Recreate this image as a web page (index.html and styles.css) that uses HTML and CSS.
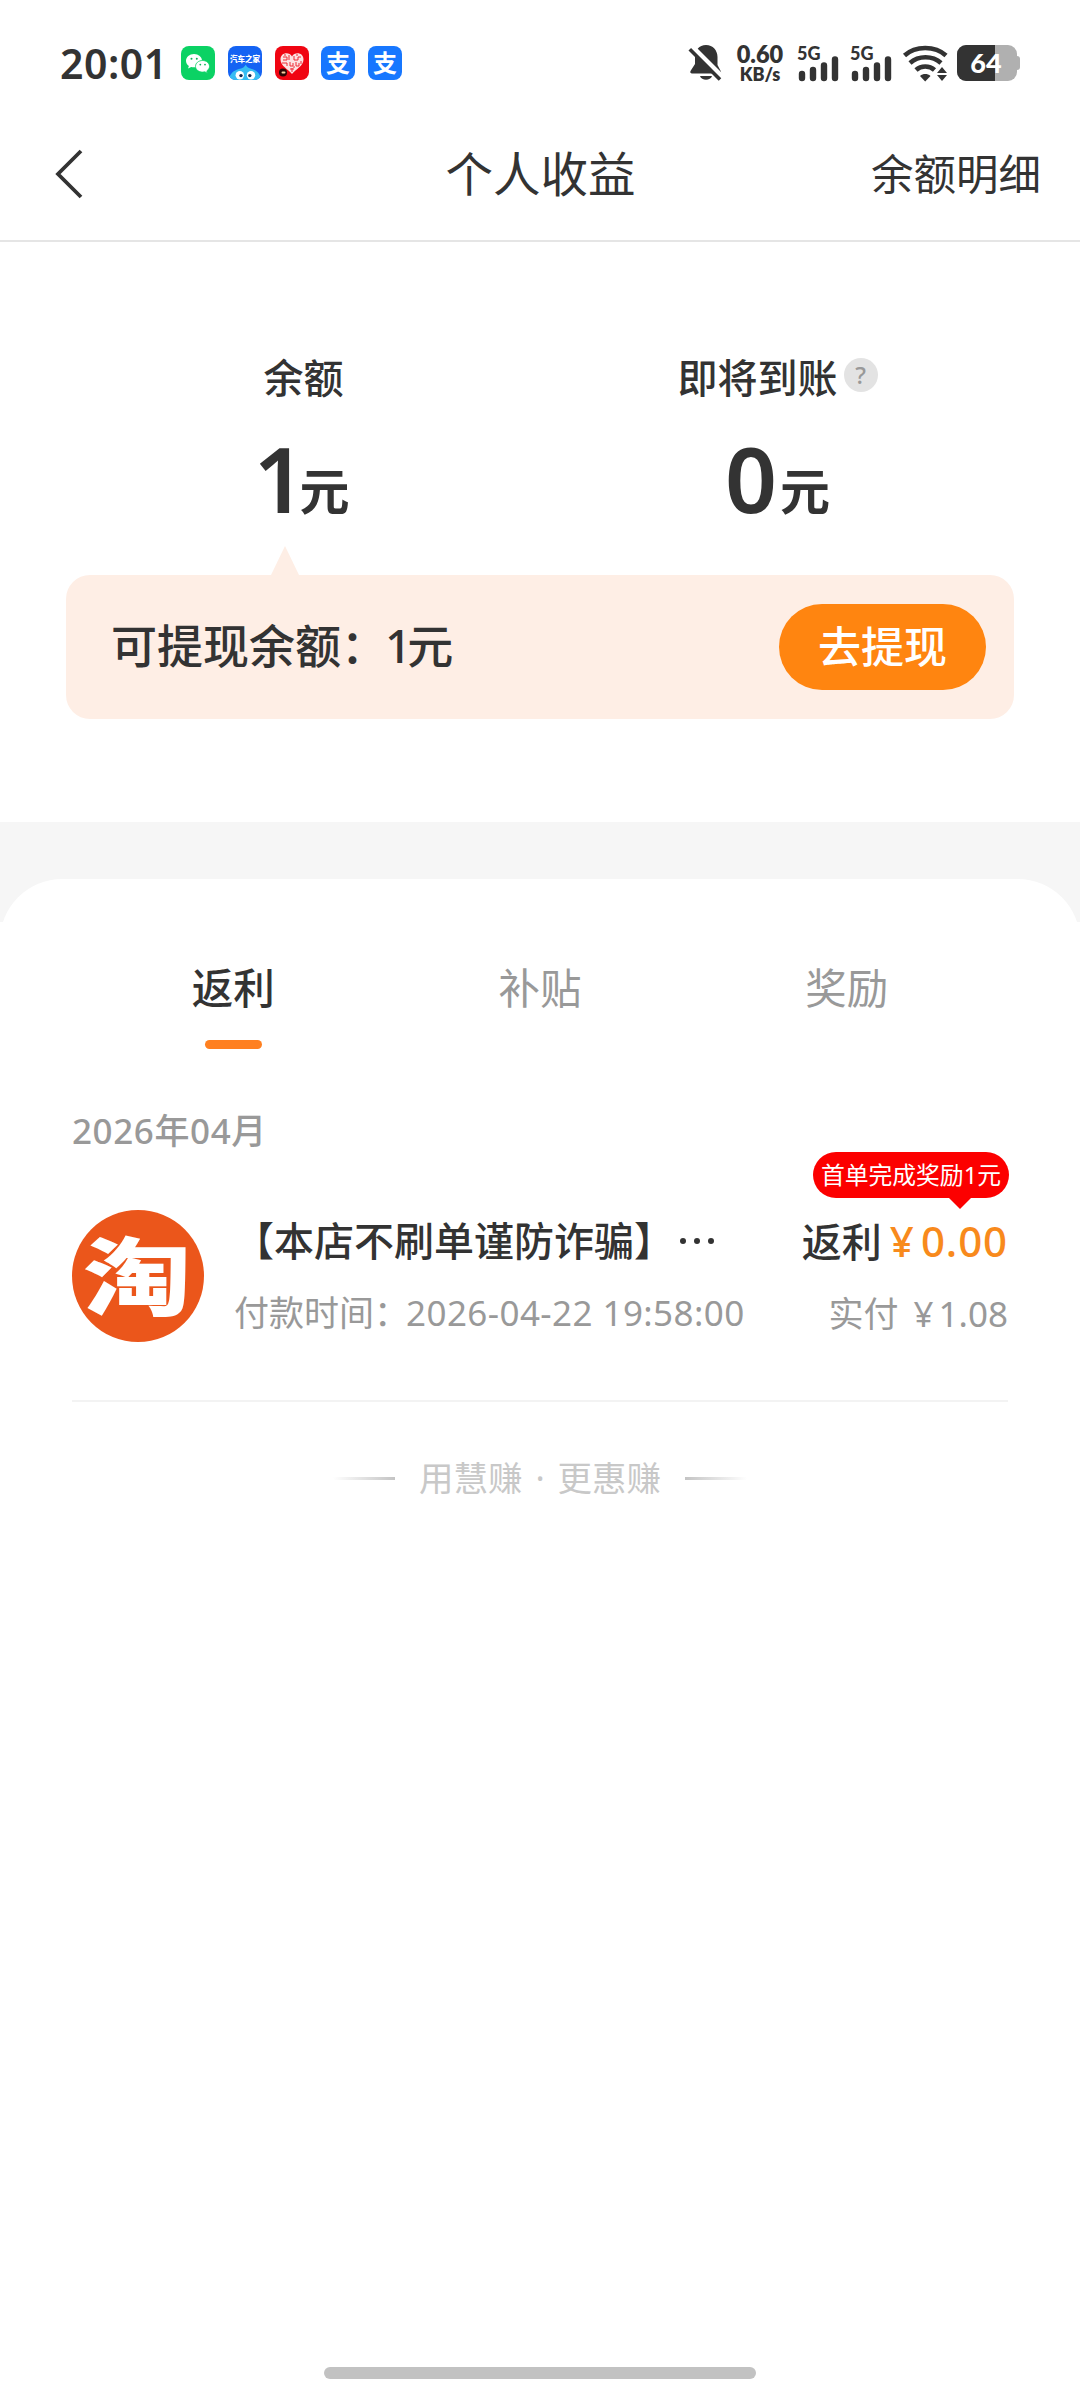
FILE: index.html
```html
<!DOCTYPE html>
<html lang="zh-CN">
<head>
<meta charset="utf-8">
<title>个人收益</title>
<link rel="stylesheet" href="styles.css">
</head>
<body>
<div class="status">
  <span class="clock">20:01</span>
  <div class="apps">
    <svg class="app" viewBox="0 0 34 34"><rect width="34" height="34" rx="8" fill="#0bd264"/><path d="M13 8C8.500 8 5 11 5 14.800c0 2.200 1.100 4 2.900 5.200L7 22.600l3.200-1.600c.9.200 1.800.3 2.800.3 4.500 0 8-3 8-6.600C21 11 17.500 8 13 8z" fill="#fff"/><path d="M21.500 14.500c-3.900 0-7 2.600-7 5.800s3.100 5.800 7 5.800c.8 0 1.600-.1 2.300-.3l2.700 1.400-.7-2.300c1.700-1.100 2.700-2.700 2.700-4.600 0-3.200-3.100-5.800-7-5.800z" fill="#fff" stroke="#0bd264" stroke-width=".8"/><g fill="#0bb457"><circle cx="10.500" cy="12.800" r="1"/><circle cx="15.800" cy="12.800" r="1"/><circle cx="19.300" cy="18.600" r=".9"/><circle cx="24" cy="18.600" r=".9"/></g></svg>
    <svg class="app" viewBox="0 0 34 34"><defs><clipPath id="tile"><rect width="34" height="34" rx="8"/></clipPath></defs><g clip-path="url(#tile)"><rect width="34" height="34" fill="#1463f3"/><path d="M1 35c0-8 6-11.500 12-12.500 2-.6 3.500-1.700 4.800-3.700 1 2.200 2.500 3.200 4.500 3.800C29 24 33 28 33 35z" fill="#36bdf2"/><circle cx="11.800" cy="29.300" r="4.200" fill="#fff"/><circle cx="23" cy="29.300" r="4.200" fill="#fff"/><circle cx="13" cy="29.600" r="1.700" fill="#102a52"/><circle cx="21.800" cy="29.600" r="1.700" fill="#102a52"/></g><text x="17" y="15.500" text-anchor="middle" class="mini">汽车之家</text></svg>
    <svg class="app" viewBox="0 0 34 34"><rect width="34" height="34" rx="8" fill="#f00512"/><path d="M17 10.500C14.500 5.500 5.500 6 5.500 13.500c0 6.500 7.500 9.500 11.500 14.500 4-5 11.500-8 11.500-14.500C28.500 6 19.500 5.500 17 10.500z" fill="#fbe3e3"/><g fill="none" stroke="#ef2b35" stroke-width="1"><path d="M8 11h4v3H8m6-5v5m5-4v4h4v-3h3M7 17h5v3m3-4v4h3v-3m3-1v4h3v-3M15 23h4m-2-1v4M10 8v2m12-2v2M26 15v3M19 20v2"/></g><circle cx="8" cy="26.500" r="4" fill="#2a0705"/><rect x="6.500" y="25.500" width="4" height="2" rx="1" fill="#f5cf9f"/></svg>
    <svg class="app" viewBox="0 0 34 34"><rect width="34" height="34" rx="8" fill="#1777ff"/><text x="17" y="25.500" text-anchor="middle" class="pay">支</text></svg>
    <svg class="app" viewBox="0 0 34 34"><rect width="34" height="34" rx="8" fill="#1777ff"/><text x="17" y="25.500" text-anchor="middle" class="pay">支</text></svg>
  </div>
  <div class="signals">
    <svg class="bell" viewBox="0 0 34 38"><path d="M17 1C10 1 6 6.500 6 13v7L1.500 27c-.6 1.500 0 2.500 1.500 2.500h28c1 0 1.500-1.200.8-2.200L28.500 21v-8C28.500 6.500 24 1 17 1z" fill="#333"/><path d="M11 32h12c-1.500 5-10.500 5-12 0z" fill="#333"/><path d="M2 3l31 31" stroke="#fff" stroke-width="7"/><path d="M.8 5.200L31 35.500" stroke="#333" stroke-width="3.600"/></svg>
    <div class="speed"><span class="rate">0.60</span><span class="unit">KB/s</span></div>
    <div class="cell"><span class="gen">5G</span><svg class="bars" viewBox="0 0 42 26"><path d="M5 19v4M16 15v8M27 10.500V23M38 4.500V23" stroke="#333" stroke-width="6.400" stroke-linecap="round"/></svg></div>
    <div class="cell"><span class="gen">5G</span><svg class="bars" viewBox="0 0 42 26"><path d="M5 19v4M16 15v8M27 10.500V23M38 4.500V23" stroke="#333" stroke-width="6.400" stroke-linecap="round"/></svg></div>
    <svg class="wifi" viewBox="0 0 45 37"><g fill="none" stroke="#333" stroke-width="4.600"><path d="M1.500 10.500C12.500.5 32 .5 43 10.500"/><path d="M7 18c8.500-7.600 22.500-7.600 31 0"/><path d="M13 25c5-4.600 13.500-4.600 18.500 0"/></g><path d="M17 31c3-2.600 7.500-2.600 10.500 0L22.200 36.500z" fill="#333"/><path d="M39 22l5 6H34zM39 36l5-6H34z" fill="#333"/></svg>
    <svg class="battery" viewBox="0 0 64 36"><defs><clipPath id="cell"><rect width="60" height="36" rx="9"/></clipPath></defs><rect x="57" y="11" width="6" height="14" rx="3" fill="#b0b0b0"/><g clip-path="url(#cell)"><rect width="60" height="36" fill="#b0b0b0"/><rect width="38" height="36" fill="#333"/></g><text x="29" y="28" text-anchor="middle" class="level">64</text></svg>
  </div>
</div>

<header class="nav">
  <svg class="back" viewBox="0 0 30 50"><path d="M27 2L4 25l23 23" fill="none" stroke="#333" stroke-width="3.800"/></svg>
  <h1 class="title">个人收益</h1>
  <span class="detail">余额明细</span>
</header>

<section class="summary">
  <div class="totals">
    <div class="total">
      <div class="label">余额</div>
      <div class="amount first"><span class="figure one">1</span><span class="yuan">元</span></div>
    </div>
    <div class="total">
      <div class="label">即将到账<span class="help">?</span></div>
      <div class="amount"><span class="figure">0</span><span class="yuan">元</span></div>
    </div>
  </div>
  <div class="banner">
    <span class="available">可提现余额：<span class="count">1</span>元</span>
    <span class="withdraw">去提现</span>
  </div>
</section>

<main class="sheet-wrap">
  <div class="sheet">
    <nav class="tabs">
      <span class="tab active">返利</span>
      <span class="tab">补贴</span>
      <span class="tab">奖励</span>
    </nav>
    <div class="month">2026年04月</div>
    <article class="order">
      <svg class="shop" viewBox="0 0 132 132"><circle cx="66" cy="66" r="66" fill="#eb561b"/><text x="0" y="0" text-anchor="middle" transform="translate(65 99) scale(1.15 .91)" class="tao">淘</text></svg>
      <div class="info">
        <div class="name">【本店不刷单谨防诈骗】<span class="dots"><i></i><i></i><i></i></span></div>
        <div class="paid-at">付款时间：<span class="stamp">2026-04-22 19:58:00</span></div>
      </div>
      <div class="money">
        <div class="rebate">返利<span class="price"><span class="yen">¥</span><span class="sum">0.00</span></span></div>
        <div class="paid">实付 <span class="yen-small">¥</span>1.08</div>
        <div class="badge">首单完成奖励1元</div>
      </div>
    </article>
    <footer class="slogan"><i class="rule left"></i><span>用慧赚 · 更惠赚</span><i class="rule right"></i></footer>
  </div>
</main>
<div class="home-bar"></div>
</body>
</html>
```
FILE: styles.css
```css
* { box-sizing: border-box; }
body {
  margin: 0;
  width: 1080px;
  height: 2400px;
  display: flex;
  flex-direction: column;
  background: #fff;
  color: #333;
  font-family: "Noto Sans", "Noto Sans CJK SC", sans-serif;
  white-space: nowrap;
}
svg { display: block; flex: none; overflow: visible; }
i { font-style: normal; }

.status { height: 126px; padding: 0 59px 0 60px; display: flex; align-items: center; }
.clock { width: 121px; font-size: 41px; font-weight: 600; line-height: 56px; letter-spacing: 0.5px; }
.apps { display: flex; gap: 12.800px; }
.app { width: 34px; height: 34px; }
.mini { font: 900 7.500px "Noto Sans CJK SC", sans-serif; fill: #fff; }
.pay { font: 700 24px "Noto Sans CJK SC", sans-serif; fill: #fff; }
.signals { margin-left: auto; display: flex; align-items: center; }
.bell { width: 34px; height: 38px; margin-right: 13px; }
.speed { width: 48px; margin-right: 13px; display: flex; flex-direction: column; align-items: center; font-family: Lato, sans-serif; font-weight: 800; }
.rate { font-size: 23.500px; line-height: 22px; margin-top: -1px; }
.unit { font-size: 18px; line-height: 18px; }
.cell { width: 42px; height: 38px; margin-right: 11px; display: grid; }
.gen { grid-area: 1 / 1; font: 900 18px/18px Lato, sans-serif; }
.bars { grid-area: 1 / 1; align-self: end; width: 42px; height: 26px; margin-bottom: 1px; }
.wifi { width: 45px; height: 37px; margin-right: 9px; }
.battery { width: 64px; height: 36px; }
.level { font: 900 27px Lato, sans-serif; fill: #fff; }

.nav { height: 116px; padding: 0 39px 19px; display: grid; grid-template-columns: 1fr auto 1fr; align-items: center; border-bottom: 2px solid #e5e5e5; }
.back { width: 30px; height: 50px; margin-left: 15px; }
.title { margin: 0 0 0 1px; font-size: 47.500px; font-weight: 400; line-height: 60px; }
.detail { justify-self: end; font-size: 42.500px; line-height: 56px; }

.summary { height: 580px; padding-top: 106px; }
.totals { display: grid; grid-template-columns: 474px 474px; justify-content: center; height: 227px; padding-left: 1px; }
.total { display: flex; flex-direction: column; align-items: center; }
.label { display: flex; align-items: center; gap: 6px; font-size: 40px; font-weight: 500; line-height: 60px; }
.help { width: 34px; height: 34px; margin-top: -6px; border-radius: 50%; background: #e3e3e3; color: #999; font-size: 24px; line-height: 34px; text-align: center; }
.amount { display: flex; align-items: baseline; font-size: 50px; font-weight: 600; line-height: 90px; margin-top: 25px; }
.first { padding-right: 4px; }
.figure { font-size: 91px; margin-right: 3px; }
.one { margin-right: -6px; }
.yuan { transform: translateY(-3px); }
.banner { position: relative; width: 948px; height: 144px; margin: 0 auto; padding: 0 28px 0 45px; display: flex; align-items: center; justify-content: space-between; border-radius: 24px; background: #feeee5; }
.banner::before { content: ""; position: absolute; left: 205px; top: -29px; border: 14px solid transparent; border-top: 0; border-bottom: 29px solid #feeee5; }
.available { font-size: 46px; font-weight: 500; line-height: 60px; padding-bottom: 4px; }
.count { margin-left: -2px; letter-spacing: -4px; }
.withdraw { width: 207px; height: 86px; border-radius: 43px; background: #ff8510; color: #fff; font-size: 43px; font-weight: 500; line-height: 86px; text-align: center; }

.sheet-wrap { padding-top: 57px; background: linear-gradient(#f6f6f6 100px, #fff 100px); }
.sheet { padding: 76px 72px 0; border-radius: 62px 62px 0 0; background: #fff; }
.tabs { padding: 0 8px; display: grid; grid-template-columns: repeat(3, 1fr); height: 94px; }
.tab { display: flex; flex-direction: column; align-items: center; justify-content: space-between; font-size: 41.500px; line-height: 66px; color: #999; }
.tab.active { color: #333; font-weight: 500; }
.tab.active::after { content: ""; width: 57px; height: 9px; border-radius: 4.500px; background: #ff8020; }
.month { margin-top: 57px; font-size: 35px; font-weight: 500; line-height: 50px; letter-spacing: 0.600px; color: #999; }
.order { height: 246px; padding-top: 54px; display: flex; border-bottom: 2px solid #f3f3f3; }
.shop { width: 132px; height: 132px; margin-right: 30px; }
.tao { font: 900 94px "Noto Sans CJK SC", sans-serif; fill: #fff; }
.info { flex: 1; }
.name { display: flex; align-items: center; font-size: 40px; font-weight: 500; line-height: 61px; }
.dots { display: flex; gap: 8px; margin-left: 6px; }
.dots i { width: 6px; height: 6px; border-radius: 50%; background: #333; }
.paid-at, .paid { margin-top: 14px; font-size: 35px; line-height: 56px; color: #999; }
.stamp { margin-left: -3px; letter-spacing: 0.420px; }
.money { position: relative; text-align: right; }
.rebate { font-size: 40px; font-weight: 500; line-height: 61px; }
.price { color: #f88a1c; font-size: 42px; font-weight: 500; }
.yen { margin: 0 7px 0 8px; }
.sum { letter-spacing: 0.900px; }
.yen-small { margin: 0 5px 0 6px; }
.badge { position: absolute; right: -1px; top: -58px; width: 196px; height: 46px; border-radius: 23px; background: #fc0000; color: #fff; font-size: 23.800px; line-height: 46px; text-align: center; }
.badge::after { content: ""; position: absolute; right: 38px; top: 100%; border: 11px solid transparent; border-bottom: 0; border-top-color: #fc0000; }
.slogan { margin-top: 46px; display: flex; align-items: center; justify-content: center; gap: 24px; font-size: 34.500px; line-height: 60px; word-spacing: 4px; color: #c8c8c8; }
.rule { width: 62px; height: 3px; }
.left { background: linear-gradient(90deg, #fff, #c4c4c4); }
.right { background: linear-gradient(90deg, #c4c4c4, #fff); }

.home-bar { width: 432px; height: 12px; margin: auto auto 21px; border-radius: 6px; background: #c2c2c2; }
```
